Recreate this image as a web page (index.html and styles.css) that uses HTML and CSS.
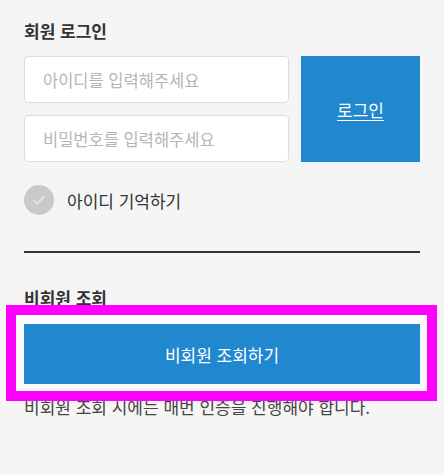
FILE: index.html
```html
<!DOCTYPE html>
<html lang="ko">
<head>
    <meta charset="UTF-8">
    <meta name="viewport" content="width=device-width, initial-scale=1.0">
    <title>로그인</title>
    <link rel="stylesheet" href="styles.css">
</head>
<body>
    <div class="container">
        <section class="member">
            <h2 class="section-title">회원 로그인</h2>
            <form class="login-form">
                <div class="fields">
                    <input type="text" placeholder="아이디를 입력해주세요">
                    <input type="password" placeholder="비밀번호를 입력해주세요">
                </div>
                <a href="#" class="login-btn">로그인</a>
            </form>
            <label class="remember">
                <span class="check">
                    <svg width="16" height="16" viewBox="0 0 16 16"><path d="M3 8.5l3.2 3.2L13 4.8" fill="none" stroke="#e2e2e2" stroke-width="2" stroke-linecap="round" stroke-linejoin="round"/></svg>
                </span>
                아이디 기억하기
            </label>
        </section>

        <hr class="divider">

        <section class="guest">
            <h2 class="section-title">비회원 조회</h2>
            <div class="guest-btn-wrap">
                <button class="guest-btn">비회원 조회하기</button>
                <span class="highlight"></span>
            </div>
            <p class="guest-note">비회원 조회 시에는 매번 인증을 진행해야 합니다.</p>
        </section>
    </div>
</body>
</html>
```

FILE: styles.css
```css
body {
    margin: 0;
    background: #f5f5f5;
    font-family: "Noto Sans CJK KR", "Noto Sans", sans-serif;
    color: #333;
}
.container {
    padding: 20px 24px 0;
}
.section-title {
    margin: 0 0 14px;
    font-size: 17px;
    line-height: 22px;
    font-weight: 700;
    color: #333;
}
.login-form {
    display: flex;
    gap: 12px;
}
.fields {
    flex: 1;
    display: flex;
    flex-direction: column;
    gap: 12px;
}
.fields input {
    height: 47px;
    box-sizing: border-box;
    padding: 0 18px;
    border: 1px solid #ddd;
    border-radius: 4px;
    background: #fff;
    font-family: inherit;
    font-size: 16.5px;
    color: #333;
}
.fields input::placeholder {
    color: #b5b5b5;
}
.login-btn {
    width: 119px;
    display: flex;
    align-items: center;
    justify-content: center;
    background: #2188d0;
    color: #fff;
    font-size: 17px;
    text-decoration: underline;
    text-decoration-thickness: 1px;
    text-underline-offset: 3px;
}
.remember {
    display: flex;
    align-items: center;
    gap: 13px;
    margin-top: 23px;
    font-size: 17px;
    color: #333;
}
.check {
    width: 30px;
    height: 30px;
    border-radius: 50%;
    background: #c9c9c9;
    display: flex;
    align-items: center;
    justify-content: center;
}
.divider {
    margin: 36px 0 0;
    border: none;
    border-top: 2px solid #333;
}
.guest {
    padding-top: 34px;
}
.guest .section-title {
    margin-bottom: 15px;
}
.guest-btn-wrap {
    position: relative;
}
.guest-btn {
    display: block;
    width: 100%;
    height: 60px;
    border: none;
    background: #2188d0;
    color: #fff;
    font-family: inherit;
    font-size: 17px;
    cursor: pointer;
}
.highlight {
    position: absolute;
    top: -19px;
    left: -18px;
    right: -17px;
    bottom: -17px;
    border: 10px solid #ff00ff;
    pointer-events: none;
    z-index: 2;
}
.highlight::after {
    content: "";
    position: absolute;
    inset: 0;
    border-style: solid;
    border-color: #fafafa;
    border-width: 9px 7px 7px 8px;
}
.guest-note {
    margin: 12px 0 0;
    font-size: 17px;
    line-height: 22px;
    color: #444;
}
```
